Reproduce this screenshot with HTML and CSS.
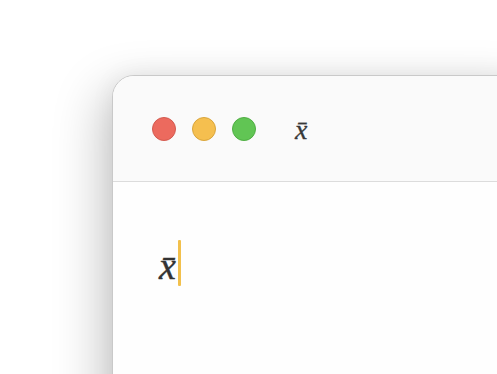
FILE: index.html
```html
<!DOCTYPE html>
<html>
<head>
<meta charset="utf-8">
<link rel="stylesheet" href="styles.css">
</head>
<body>
<div class="stage">
  <div class="window">
    <div class="titlebar">
      <div class="lights">
        <span class="light red"></span>
        <span class="light yellow"></span>
        <span class="light green"></span>
      </div>
      <div class="title">x̄</div>
    </div>
    <div class="content">
      <span class="formula">x̄</span><span class="caret"></span>
    </div>
  </div>
</div>
</body>
</html>
```
FILE: styles.css
```css
html, body {
  margin: 0;
  padding: 0;
  background: #ffffff;
  overflow: hidden;
}
.stage {
  width: 497px;
  height: 374px;
  padding: 75px 0 0 112px;
  box-sizing: border-box;
  overflow: hidden;
}
.window {
  width: 420px;
  height: 360px;
  background: #fefefe;
  border: 1px solid #c9c9c9;
  border-top-left-radius: 22px;
  box-shadow: -10px 15px 50px rgba(0,0,0,0.22), 0 0 25px rgba(0,0,0,0.06);
  overflow: hidden;
}
.titlebar {
  height: 105px;
  background: #fafafa;
  border-bottom: 1px solid #dcdcdc;
  display: flex;
  align-items: center;
  padding-left: 39px;
}
.lights {
  display: flex;
  gap: 16px;
}
.light {
  width: 22px;
  height: 22px;
  border-radius: 50%;
  display: block;
}
.red { background: #ec6a5e; border: 1px solid #d35a4f; }
.yellow { background: #f5bf4f; border: 1px solid #d9a53b; }
.green { background: #61c554; border: 1px solid #4fae43; }
.title {
  margin-left: 39px;
  margin-top: 2px;
  font-family: "Liberation Serif", serif;
  font-style: italic;
  font-size: 28px;
  color: #383838;
  line-height: 1;
  -webkit-text-stroke: 0.3px #383838;
}
.content {
  display: flex;
  align-items: center;
  padding: 58px 0 0 46px;
}
.formula {
  font-family: "Liberation Serif", serif;
  font-style: italic;
  font-size: 38px;
  color: #333;
  line-height: 1;
  margin-top: 6px;
  -webkit-text-stroke: 0.4px #333;
}
.caret {
  width: 3px;
  height: 46px;
  background: #f2c04c;
  margin-left: 2px;
  border-radius: 1px;
}
```
